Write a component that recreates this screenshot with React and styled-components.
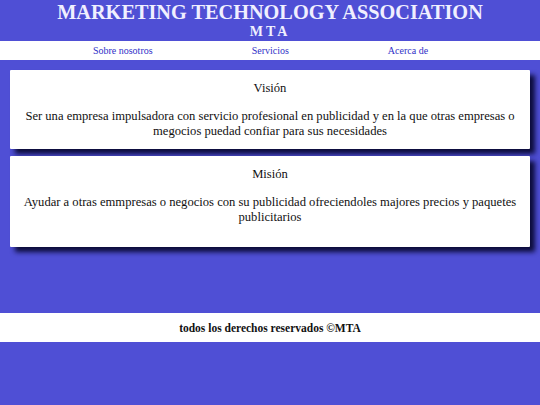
import React from "react";
import styled, { createGlobalStyle } from "styled-components";

const serif = `"Liberation Serif", "Times New Roman", serif`;

const GlobalStyle = createGlobalStyle`
  body {
    margin: 0;
    padding: 0;
    background-color: #4f4fd5;
  }
`;

const Page = styled.div`
  font-family: ${serif};
`;

const Title = styled.h1`
  margin: 0;
  padding-top: 1px;
  text-align: center;
  color: #f0efff;
  font-family: ${serif};
  font-size: 20.3px;
  line-height: 23px;
  font-weight: bold;
`;

const Subtitle = styled.h2`
  margin: 0;
  text-align: center;
  color: #f0efff;
  font-family: ${serif};
  font-size: 14px;
  line-height: 16px;
  letter-spacing: 3px;
  font-weight: bold;
`;

const Nav = styled.nav`
  margin-top: 1px;
  background-color: #fff;
  height: 19px;
  display: flex;
  justify-content: center;
  align-items: center;
  gap: 99px;
  padding-right: 19px;
`;

const NavLink = styled.a`
  font-family: ${serif};
  font-size: 10px;
  color: #3131c8;
  text-decoration: none;
`;

const Main = styled.main`
  padding: 10px 10px 0;
  display: flex;
  flex-direction: column;
  gap: 7px;
  min-height: 243px;
`;

const Card = styled.section`
  background-color: #fff;
  border-radius: 1px;
  box-shadow: 5px 5px 5px #0c0c3a;
  text-align: center;
  color: #111;
  font-family: ${serif};
  font-size: 12.6px;
  line-height: 15px;
  padding: 11px 12px ${(p) => p.$bottom || 10}px;
`;

const CardTitle = styled.h3`
  margin: 0 0 13px;
  font-family: ${serif};
  font-size: 12.6px;
  line-height: 15px;
  font-weight: normal;
`;

const CardText = styled.p`
  margin: 0;
  font-family: ${serif};
`;

const Footer = styled.footer`
  background-color: #fff;
  height: 29px;
  display: flex;
  align-items: center;
  justify-content: center;
  font-family: ${serif};
  font-size: 11.5px;
  font-weight: bold;
  color: #111;
`;

export default function App() {
  return (
    <Page>
      <GlobalStyle />
      <header>
        <Title>MARKETING TECHNOLOGY ASSOCIATION</Title>
        <Subtitle>MTA</Subtitle>
      </header>
      <Nav>
        <NavLink href="#sobre">Sobre nosotros</NavLink>
        <NavLink href="#servicios">Servicios</NavLink>
        <NavLink href="#acerca">Acerca de</NavLink>
      </Nav>
      <Main>
        <Card $bottom={10}>
          <CardTitle>Visión</CardTitle>
          <CardText>
            Ser una empresa impulsadora con servicio profesional en publicidad y en la que otras empresas o
            megocios puedad confiar para sus necesidades
          </CardText>
        </Card>
        <Card $bottom={22}>
          <CardTitle>Misión</CardTitle>
          <CardText>
            Ayudar a otras emmpresas o negocios con su publicidad ofreciendoles majores precios y paquetes
            publicitarios
          </CardText>
        </Card>
      </Main>
      <Footer>todos los derechos reservados ©MTA</Footer>
    </Page>
  );
}
